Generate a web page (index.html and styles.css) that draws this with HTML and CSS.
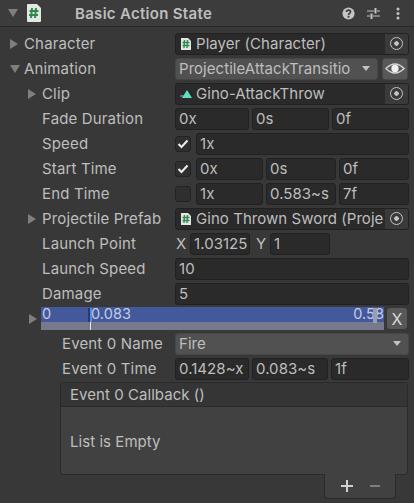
FILE: index.html
```html
<!DOCTYPE html>
<html lang="en">
<head>
  <meta charset="UTF-8">
  <title>Basic Action State</title>
  <link rel="stylesheet" href="styles.css">
</head>
<body>

  <header class="header">
    <span class="arrow arrow-down arrow-head"></span>
    <svg class="script-icon" viewBox="0 0 16 20">
      <path d="M1 2 Q1 1 2 1 H11 L15 5 V18 Q15 19 14 19 H2 Q1 19 1 18 Z" fill="#e4e6e2"/>
      <path d="M6 5 L5 15 M10 5 L9 15 M3.500 8 H12.500 M3 12 H12" stroke="#2f8a4e" stroke-width="2" fill="none"/>
    </svg>
    <h1>Basic Action State</h1>
    <div class="header-icons">
      <svg class="icon-help" width="13" height="13" viewBox="0 0 14 14">
        <circle cx="7" cy="7" r="6.500" fill="#c4c4c4"/>
        <path d="M4.800 5.400 Q5 3.400 7 3.400 Q9.200 3.400 9.200 5.200 Q9.200 6.300 8 6.900 Q7 7.400 7 8.500" stroke="#3c3c3c" stroke-width="1.800" fill="none"/>
        <rect x="6" y="9.500" width="2" height="2" fill="#3c3c3c"/>
      </svg>
      <svg class="icon-sliders" width="13" height="13" viewBox="0 0 13 13">
        <path d="M0 4 H7 M10 4 H13 M0 9 H3 M6 9 H13" stroke="#c4c4c4" stroke-width="1" fill="none"/>
        <path d="M8.500 1 V6.500 M4.500 6.500 V12" stroke="#c4c4c4" stroke-width="2" fill="none"/>
      </svg>
      <svg class="icon-dots" width="6" height="13" viewBox="0 0 6 13">
        <circle cx="3" cy="2" r="1.500" fill="#c4c4c4"/>
        <circle cx="3" cy="6.500" r="1.500" fill="#c4c4c4"/>
        <circle cx="3" cy="11" r="1.500" fill="#c4c4c4"/>
      </svg>
    </div>
  </header>

  <main class="inspector">
    <div class="row">
      <span class="label"><span class="arrow arrow-right"></span>Character</span>
      <div class="field object-field">
        <svg class="mini-script" viewBox="0 0 12 14"><path d="M1 1 H8 L11 4 V13 H1 Z" fill="#e4e6e2"/><path d="M4.500 3 L4 11 M7.500 3 L7 11 M2.500 5.500 H9.500 M2.500 8.500 H9.500" stroke="#2f8a4e" stroke-width="1.400"/></svg>
        <span class="value">Player (Character)</span>
        <span class="target"><i></i></span>
      </div>
    </div>

    <div class="row">
      <span class="label"><span class="arrow arrow-down"></span>Animation</span>
      <div class="dropdown dropdown-short">
        <span class="value">ProjectileAttackTransitio</span>
        <span class="caret"></span>
      </div>
      <button class="eye-btn">
        <svg width="22" height="14" viewBox="0 0 22 14">
          <path d="M1 7 Q11 -3 21 7 Q11 17 1 7 Z" fill="none" stroke="#d6d6d6" stroke-width="1.500"/>
          <circle cx="11" cy="7" r="4" fill="#f2f2f2"/>
        </svg>
      </button>
    </div>

    <div class="row indent">
      <span class="label"><span class="arrow arrow-right"></span>Clip</span>
      <div class="field object-field">
        <svg class="mini-clip" viewBox="0 0 12 12"><path d="M0 7 H4 V9 H0 Z" fill="#6a6a6a"/><path d="M7 2 L12 10 H2 Z" fill="#5fe0c4"/></svg>
        <span class="value">Gino-AttackThrow</span>
        <span class="target"><i></i></span>
      </div>
    </div>

    <div class="row indent">
      <span class="label">Fade Duration</span>
      <div class="fields">
        <div class="field w-74">0x</div>
        <div class="field w-77">0s</div>
        <div class="field grow">0f</div>
      </div>
    </div>

    <div class="row indent">
      <span class="label">Speed</span>
      <div class="fields">
        <span class="check"><svg width="12" height="10" viewBox="0 0 12 10"><path d="M1.500 5 L4.500 8 L10.500 1.500" fill="none" stroke="#eee" stroke-width="2"/></svg></span>
        <div class="field grow">1x</div>
      </div>
    </div>

    <div class="row indent">
      <span class="label">Start Time</span>
      <div class="fields">
        <span class="check"><svg width="12" height="10" viewBox="0 0 12 10"><path d="M1.500 5 L4.500 8 L10.500 1.500" fill="none" stroke="#eee" stroke-width="2"/></svg></span>
        <div class="field w-67">0x</div>
        <div class="field w-69">0s</div>
        <div class="field grow">0f</div>
      </div>
    </div>

    <div class="row indent">
      <span class="label">End Time</span>
      <div class="fields">
        <span class="check"></span>
        <div class="field w-67">1x</div>
        <div class="field w-69">0.583~s</div>
        <div class="field grow">7f</div>
      </div>
    </div>

    <div class="row indent">
      <span class="label"><span class="arrow arrow-right"></span>Projectile Prefab</span>
      <div class="field object-field">
        <svg class="mini-script" viewBox="0 0 12 14"><path d="M1 1 H8 L11 4 V13 H1 Z" fill="#e4e6e2"/><path d="M4.500 3 L4 11 M7.500 3 L7 11 M2.500 5.500 H9.500 M2.500 8.500 H9.500" stroke="#2f8a4e" stroke-width="1.400"/></svg>
        <span class="value">Gino Thrown Sword (Proje</span>
        <span class="target"><i></i></span>
      </div>
    </div>

    <div class="row indent">
      <span class="label">Launch Point</span>
      <div class="fields vector">
        <span class="axis">X</span>
        <div class="field w-60"><span class="clip">1.03125</span></div>
        <span class="axis axis-y">Y</span>
        <div class="field w-60">1</div>
      </div>
    </div>

    <div class="row indent">
      <span class="label">Launch Speed</span>
      <div class="field">10</div>
    </div>

    <div class="row indent">
      <span class="label">Damage</span>
      <div class="field">5</div>
    </div>

    <div class="timeline-row">
      <span class="arrow arrow-right"></span>
      <div class="timeline">
        <div class="timeline-top">
          <span>0</span>
          <span class="tl-mark">0.083</span>
          <span class="tl-end">0.58</span>
        </div>
        <div class="timeline-bottom"></div>
        <i class="tl-handle"></i>
        <i class="tl-line"></i>
        <i class="tl-end-handle"></i>
      </div>
      <button class="x-btn">X</button>
    </div>

    <div class="row event">
      <span class="label">Event 0 Name</span>
      <div class="dropdown">
        <span class="value">Fire</span>
        <span class="caret"></span>
      </div>
    </div>

    <div class="row event">
      <span class="label">Event 0 Time</span>
      <div class="fields">
        <div class="field w-74">0.1428~x</div>
        <div class="field w-76">0.083~s</div>
        <div class="field grow">1f</div>
      </div>
    </div>

    <section class="list-box">
      <div class="list-head">Event 0 Callback ()</div>
      <div class="list-body">List is Empty</div>
    </section>
    <div class="list-footer">
      <span class="plus"></span>
      <span class="minus"></span>
    </div>
  </main>

</body>
</html>
```

FILE: styles.css
```css
body {
  margin: 0;
  width: 414px;
  height: 503px;
  overflow: hidden;
  background-color: #383838;
  color: #bebebe;
  font-family: Inter, "Noto Sans", sans-serif;
  font-size: 15px;
  letter-spacing: 0.05px;
}
.header {
  display: flex;
  align-items: center;
  height: 27px;
  box-sizing: border-box;
  background-color: #3c3c3c;
  border-bottom: 1px solid #2a2a2a;
  padding-left: 8px;
}
.header h1 {
  margin: 0 0 0 33px;
  font-size: 15px;
  font-weight: 600;
  letter-spacing: 0.3px;
}
.script-icon {
  width: 16px;
  height: 20px;
  margin-left: 8px;
}
.header-icons {
  display: flex;
  align-items: center;
  margin-left: auto;
  padding-right: 13px;
}
.icon-sliders {
  margin-left: 12px;
}
.icon-dots {
  margin-left: 15px;
}
.arrow {
  display: inline-block;
  width: 0;
  height: 0;
  flex: none;
}
.arrow-right {
  border-top: 5px solid transparent;
  border-bottom: 5px solid transparent;
  border-left: 8px solid #7f7f7f;
  margin-right: 6px;
}
.arrow-down {
  border-left: 5px solid transparent;
  border-right: 5px solid transparent;
  border-top: 8px solid #7f7f7f;
  margin-right: 4px;
}
.arrow-head {
  margin-right: 0;
}
.inspector {
  padding: 4px 5px 0 10px;
}
.row {
  display: flex;
  align-items: center;
  height: 25px;
}
.label {
  display: flex;
  align-items: center;
  width: 165px;
  flex: none;
  letter-spacing: 0.15px;
}
.indent .label {
  width: 147px;
  margin-left: 18px;
}
.indent .label:not(:has(.arrow)) {
  padding-left: 14px;
  width: 133px;
}
.event .label {
  width: 113px;
  margin-left: 52px;
}
.field {
  flex: 1;
  min-width: 0;
  height: 22px;
  box-sizing: border-box;
  display: flex;
  align-items: center;
  padding-left: 3px;
  background-color: #2a2a2a;
  border: 1px solid #212121;
  border-radius: 3px;
  white-space: nowrap;
  overflow: hidden;
}
.fields {
  flex: 1;
  display: flex;
  align-items: center;
  gap: 3px;
  min-width: 0;
}
.grow {
  flex: 1;
}
.w-60 { flex: none; width: 60px; }
.w-67 { flex: none; width: 67px; }
.w-69 { flex: none; width: 70px; }
.w-74 { flex: none; width: 74px; }
.w-76 { flex: none; width: 76px; }
.w-77 { flex: none; width: 77px; }
.object-field {
  padding-left: 4px;
}
.value {
  flex: 1;
  min-width: 0;
  overflow: hidden;
  white-space: nowrap;
}
.mini-script {
  width: 12px;
  height: 14px;
  margin-right: 4px;
  flex: none;
}
.mini-clip {
  width: 12px;
  height: 12px;
  margin-right: 4px;
  flex: none;
}
.target {
  width: 23px;
  height: 20px;
  flex: none;
  display: flex;
  align-items: center;
  justify-content: center;
  background-color: #3a3a3a;
}
.target i {
  width: 11px;
  height: 11px;
  border: 1.500px solid #c4c4c4;
  border-radius: 50%;
  background: radial-gradient(circle, #c4c4c4 0 2px, transparent 2.500px);
}
.dropdown {
  flex: 1;
  height: 22px;
  box-sizing: border-box;
  display: flex;
  align-items: center;
  padding: 0 7px 0 3px;
  background-color: #515151;
  border: 1px solid #464646;
  border-radius: 3px;
  min-width: 0;
}
.dropdown-short {
  flex: none;
  width: 203px;
}
.caret {
  flex: none;
  margin-left: 4px;
  border-left: 4.500px solid transparent;
  border-right: 4.500px solid transparent;
  border-top: 5px solid #c4c4c4;
}
.eye-btn {
  width: 26px;
  height: 22px;
  margin-left: 4px;
  padding: 0;
  border: 1px solid #464646;
  border-radius: 3px;
  background-color: #585858;
  display: flex;
  align-items: center;
  justify-content: center;
}
.eye-btn svg {
  width: 20px;
  height: 13px;
}
.check {
  width: 16px;
  height: 16px;
  flex: none;
  margin-right: 2px;
  display: flex;
  align-items: center;
  justify-content: center;
  background-color: #2f2f2f;
  border: 1px solid #232323;
  border-radius: 3px;
  box-sizing: border-box;
}
.vector {
  gap: 0;
}
.axis {
  width: 15px;
  flex: none;
  padding-left: 1px;
  box-sizing: border-box;
}
.axis-y {
  width: 20px;
  padding-left: 6px;
}
.clip {
  display: block;
  width: 53px;
  overflow: hidden;
}
.timeline-row {
  display: flex;
  align-items: center;
  height: 25px;
  padding-left: 19px;
}
.timeline-row .arrow {
  margin-right: 4px;
}
.timeline {
  position: relative;
  width: 343px;
  height: 23px;
  flex: none;
}
.timeline-top {
  height: 15px;
  box-sizing: border-box;
  padding: 0 0 2px 1px;
  background-color: #44599c;
  display: flex;
  align-items: center;
  color: #c4cbe4;
  font-size: 14.500px;
  line-height: 13px;
}
.tl-mark {
  position: absolute;
  left: 50px;
}
.tl-end {
  margin-left: auto;
}
.timeline-bottom {
  height: 8px;
  background-color: #767a8c;
}
.tl-handle {
  position: absolute;
  left: 47px;
  top: 1px;
  width: 2px;
  height: 14px;
  background-color: #2c3a68;
  border-right: 2px solid #4d8ff0;
}
.tl-line {
  position: absolute;
  left: 49px;
  top: 15px;
  width: 1px;
  height: 8px;
  background-color: #e4e4e4;
}
.tl-end-handle {
  position: absolute;
  left: 332px;
  top: 1px;
  width: 4px;
  height: 15px;
  background-color: #9a9fae;
}
.x-btn {
  width: 20px;
  height: 21px;
  margin-left: 3px;
  padding: 0;
  border: 0;
  border-radius: 3px;
  background-color: #585858;
  color: #d8d8d8;
  font-family: inherit;
  font-size: 16px;
}
.list-box {
  margin: 1px 0 0 50px;
  width: 348px;
  height: 93px;
  box-sizing: border-box;
  background-color: #414141;
  border: 1px solid #2a2a2a;
  border-radius: 3px;
}
.list-head {
  height: 24px;
  box-sizing: border-box;
  padding-left: 9px;
  display: flex;
  align-items: center;
  background-color: #353535;
  border-bottom: 1px solid #2a2a2a;
}
.list-body {
  padding: 25px 0 0 9px;
}
.list-footer {
  display: flex;
  align-items: center;
  justify-content: space-around;
  width: 72px;
  height: 25px;
  box-sizing: border-box;
  margin: -1px 0 0 314px;
  padding: 0 7px;
  background-color: #414141;
  border: 1px solid #2a2a2a;
  border-top: 0;
  border-radius: 0 0 4px 4px;
}
.plus {
  position: relative;
  width: 12px;
  height: 2px;
  background-color: #d0d0d0;
}
.plus::after {
  content: "";
  position: absolute;
  left: 5px;
  top: -5px;
  width: 2px;
  height: 12px;
  background-color: #d0d0d0;
}
.minus {
  width: 10px;
  height: 2px;
  background-color: #7f7f7f;
}
```
